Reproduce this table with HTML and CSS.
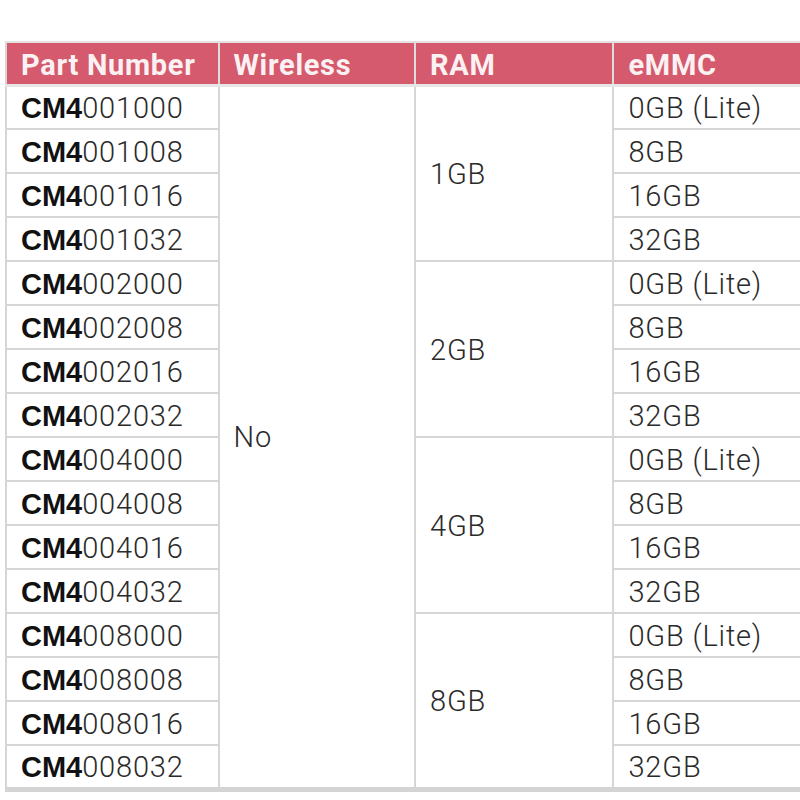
FILE: index.html
```html
<!DOCTYPE html>
<html>
<head>
<meta charset="utf-8">
<link rel="stylesheet" href="styles.css">
</head>
<body>
<table class="parts">
  <thead>
    <tr><th class="c1">Part Number</th><th class="c2">Wireless</th><th class="c3">RAM</th><th class="c4">eMMC</th></tr>
  </thead>
  <tbody>
    <tr><td><b>CM4</b>001000</td><td rowspan="16">No</td><td rowspan="4">1GB</td><td>0GB (Lite)</td></tr>
    <tr><td><b>CM4</b>001008</td><td>8GB</td></tr>
    <tr><td><b>CM4</b>001016</td><td>16GB</td></tr>
    <tr><td><b>CM4</b>001032</td><td>32GB</td></tr>
    <tr><td><b>CM4</b>002000</td><td rowspan="4">2GB</td><td>0GB (Lite)</td></tr>
    <tr><td><b>CM4</b>002008</td><td>8GB</td></tr>
    <tr><td><b>CM4</b>002016</td><td>16GB</td></tr>
    <tr><td><b>CM4</b>002032</td><td>32GB</td></tr>
    <tr><td><b>CM4</b>004000</td><td rowspan="4">4GB</td><td>0GB (Lite)</td></tr>
    <tr><td><b>CM4</b>004008</td><td>8GB</td></tr>
    <tr><td><b>CM4</b>004016</td><td>16GB</td></tr>
    <tr><td><b>CM4</b>004032</td><td>32GB</td></tr>
    <tr><td><b>CM4</b>008000</td><td rowspan="4">8GB</td><td>0GB (Lite)</td></tr>
    <tr><td><b>CM4</b>008008</td><td>8GB</td></tr>
    <tr><td><b>CM4</b>008016</td><td>16GB</td></tr>
    <tr><td><b>CM4</b>008032</td><td>32GB</td></tr>
  </tbody>
</table>
</body>
</html>
```

FILE: styles.css
```css
html, body {
  margin: 0;
  padding: 0;
  background: #ffffff;
  overflow: hidden;
}
body {
  padding: 41px 0 0 5px;
  font-family: Roboto, "Liberation Sans", sans-serif;
}
.parts {
  border-collapse: collapse;
  table-layout: fixed;
  width: 810px;
  border-top: 2px solid #e2e2e2;
  border-left: 2px solid #d6d6d6;
  border-bottom: 5px solid #d4d4d4;
}
.c1 { width: 212px; }
.c2 { width: 196px; }
.c3 { width: 198px; }
.c4 { width: 200px; }
.parts th {
  background: #d55a6d;
  color: #fbf1f2;
  font-weight: 700;
  font-size: 29px;
  letter-spacing: 0.7px;
  text-align: left;
  height: 43px;
  padding: 3px 0 0 14px;
  border-left: 2px solid #dcdcdc;
  border-bottom: 3px solid #e6e6e6;
  box-sizing: border-box;
}
.parts th.c1 { border-left: none; }
.parts td {
  font-family: Roboto, sans-serif;
  font-size: 29px;
  font-weight: 300;
  letter-spacing: 0.8px;
  color: #2a2a2a;
  height: 44px;
  padding: 1px 0 0 14px;
  border: 2px solid #d6d6d6;
  box-sizing: border-box;
  line-height: 38px;
}
.parts td b {
  font-family: "Liberation Sans", Arial, sans-serif;
  font-weight: 700;
  letter-spacing: 0;
  color: #111111;
}
```
